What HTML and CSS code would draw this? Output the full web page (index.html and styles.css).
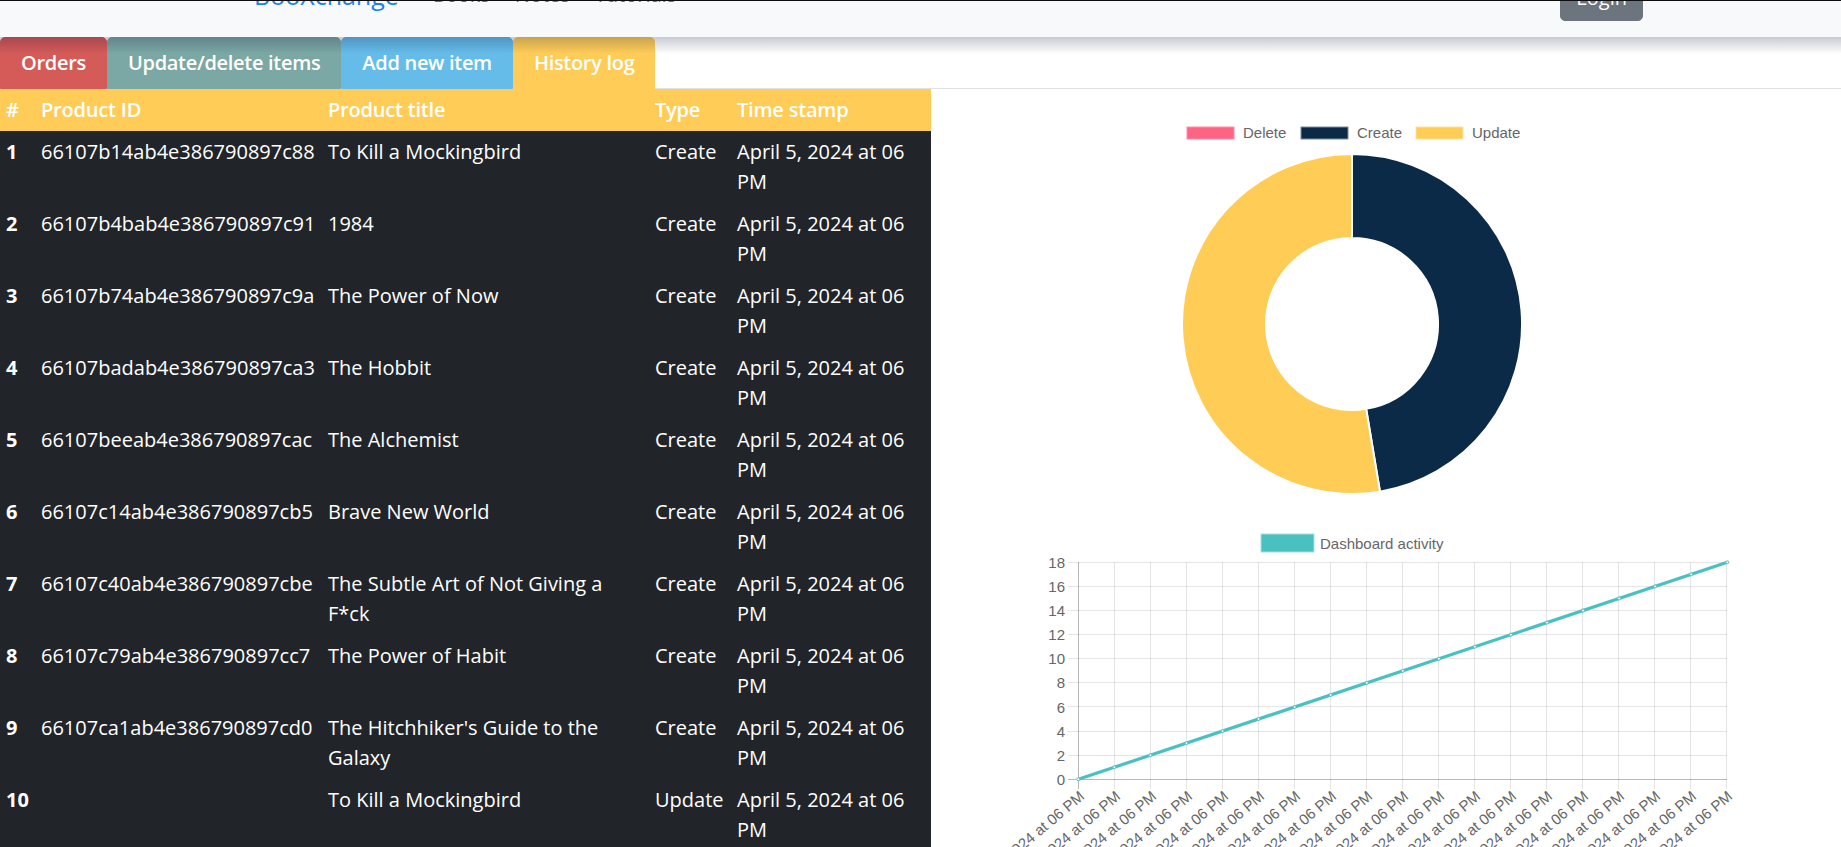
FILE: index.html
```html
<!DOCTYPE html>
<html lang="en">
<head>
<meta charset="utf-8">
<title>BooXchange - History log</title>
<link rel="stylesheet" href="styles.css">
</head>
<body>
<nav class="navbar">
  <div class="nav-inner">
    <a class="brand" href="#">BooXchange</a>
    <ul class="nav-links">
      <li><a href="#">Books</a></li>
      <li><a href="#">Notes</a></li>
      <li><a href="#">Tutorials</a></li>
    </ul>
    <button class="login">Login</button>
  </div>
</nav>

<ul class="tabs">
  <li class="tab tab-orders">Orders</li>
  <li class="tab tab-update">Update/delete items</li>
  <li class="tab tab-add">Add new item</li>
  <li class="tab tab-history">History log</li>
</ul>

<main class="content">
  <table class="log">
    <colgroup>
      <col class="c-num"><col class="c-id"><col class="c-title"><col class="c-type"><col class="c-time">
    </colgroup>
    <thead>
      <tr><th>#</th><th>Product ID</th><th>Product title</th><th>Type</th><th>Time stamp</th></tr>
    </thead>
    <tbody>
      <tr><th>1</th><td>66107b14ab4e386790897c88</td><td>To Kill a Mockingbird</td><td class="type">Create</td><td>April 5, 2024 at 06 PM</td></tr>
      <tr><th>2</th><td>66107b4bab4e386790897c91</td><td>1984</td><td class="type">Create</td><td>April 5, 2024 at 06 PM</td></tr>
      <tr><th>3</th><td>66107b74ab4e386790897c9a</td><td>The Power of Now</td><td class="type">Create</td><td>April 5, 2024 at 06 PM</td></tr>
      <tr><th>4</th><td>66107badab4e386790897ca3</td><td>The Hobbit</td><td class="type">Create</td><td>April 5, 2024 at 06 PM</td></tr>
      <tr><th>5</th><td>66107beeab4e386790897cac</td><td>The Alchemist</td><td class="type">Create</td><td>April 5, 2024 at 06 PM</td></tr>
      <tr><th>6</th><td>66107c14ab4e386790897cb5</td><td>Brave New World</td><td class="type">Create</td><td>April 5, 2024 at 06 PM</td></tr>
      <tr><th>7</th><td>66107c40ab4e386790897cbe</td><td>The Subtle Art of Not Giving a F*ck</td><td class="type">Create</td><td>April 5, 2024 at 06 PM</td></tr>
      <tr><th>8</th><td>66107c79ab4e386790897cc7</td><td>The Power of Habit</td><td class="type">Create</td><td>April 5, 2024 at 06 PM</td></tr>
      <tr><th>9</th><td>66107ca1ab4e386790897cd0</td><td>The Hitchhiker's Guide to the Galaxy</td><td class="type">Create</td><td>April 5, 2024 at 06 PM</td></tr>
      <tr><th>10</th><td></td><td>To Kill a Mockingbird</td><td class="type">Update</td><td>April 5, 2024 at 06 PM</td></tr>
    </tbody>
  </table>

  <section class="charts">
    <svg class="chart chart-doughnut" width="910" height="420" viewBox="0 0 910 420">
      <g class="legend">
        <rect x="256" y="38" width="47" height="12" fill="#ff6384" stroke="#ff8fa6" stroke-width="1"/>
        <text x="312" y="48.6">Delete</text>
        <rect x="370" y="38" width="47" height="12" fill="#0b2a48" stroke="#7d8b9b" stroke-width="1"/>
        <text x="426" y="48.6">Create</text>
        <rect x="485" y="38" width="47" height="12" fill="#ffcd56" stroke="#ffe1a0" stroke-width="1"/>
        <text x="541" y="48.6">Update</text>
      </g>
      <path d="M421,65 A170,170 0 0 1 448.97,402.69 L435.15,319.83 A86,86 0 0 0 421,149 Z" fill="#0b2a48" stroke="#fff" stroke-width="2"/>
      <path d="M448.97,402.69 A170,170 0 1 1 421,65 L421,149 A86,86 0 1 0 435.15,319.83 Z" fill="#ffcd56" stroke="#fff" stroke-width="2"/>
    </svg>

    <svg class="chart chart-line" width="910" height="400" viewBox="0 0 910 400">
      <g class="legend">
        <rect x="330" y="25" width="53" height="18" fill="#4bc0c0" stroke="#a5e0e0" stroke-width="1"/>
        <text x="389" y="39.5">Dashboard activity</text>
      </g>
      <path class="grid" d="M137,246.5H796M137,222.5H796M137,197.5H796M137,173.5H796M137,149.5H796M137,125.5H796M137,101.5H796M137,77.5H796M137,53.5H796
        M183.5,53V280M219.5,53V280M255.5,53V280M291.5,53V280M327.5,53V280M363.5,53V280M399.5,53V280M435.5,53V280M471.5,53V280M507.5,53V280M543.5,53V280M579.5,53V280M615.5,53V280M651.5,53V280M687.5,53V280M723.5,53V280M759.5,53V280M795.5,53V280"/>
      <path class="axis" d="M137,270.5H796M147.5,53V280"/>
      <g class="ylabels">
        <text x="134" y="275.8">0</text>
        <text x="134" y="251.7">2</text>
        <text x="134" y="227.6">4</text>
        <text x="134" y="203.5">6</text>
        <text x="134" y="179.4">8</text>
        <text x="134" y="155.3">10</text>
        <text x="134" y="131.2">12</text>
        <text x="134" y="107.1">14</text>
        <text x="134" y="82.9">16</text>
        <text x="134" y="58.8">18</text>
      </g>
      <g class="xlabels">
        <text transform="translate(151,285) rotate(-40)" dy="0.35em">April 5, 2024 at 06 PM</text>
        <text transform="translate(187,285) rotate(-40)" dy="0.35em">April 5, 2024 at 06 PM</text>
        <text transform="translate(223,285) rotate(-40)" dy="0.35em">April 5, 2024 at 06 PM</text>
        <text transform="translate(259,285) rotate(-40)" dy="0.35em">April 5, 2024 at 06 PM</text>
        <text transform="translate(295,285) rotate(-40)" dy="0.35em">April 5, 2024 at 06 PM</text>
        <text transform="translate(331,285) rotate(-40)" dy="0.35em">April 5, 2024 at 06 PM</text>
        <text transform="translate(367,285) rotate(-40)" dy="0.35em">April 5, 2024 at 06 PM</text>
        <text transform="translate(403,285) rotate(-40)" dy="0.35em">April 5, 2024 at 06 PM</text>
        <text transform="translate(439,285) rotate(-40)" dy="0.35em">April 5, 2024 at 06 PM</text>
        <text transform="translate(475,285) rotate(-40)" dy="0.35em">April 5, 2024 at 06 PM</text>
        <text transform="translate(511,285) rotate(-40)" dy="0.35em">April 5, 2024 at 06 PM</text>
        <text transform="translate(547,285) rotate(-40)" dy="0.35em">April 5, 2024 at 06 PM</text>
        <text transform="translate(583,285) rotate(-40)" dy="0.35em">April 5, 2024 at 06 PM</text>
        <text transform="translate(619,285) rotate(-40)" dy="0.35em">April 5, 2024 at 06 PM</text>
        <text transform="translate(655,285) rotate(-40)" dy="0.35em">April 5, 2024 at 06 PM</text>
        <text transform="translate(691,285) rotate(-40)" dy="0.35em">April 5, 2024 at 06 PM</text>
        <text transform="translate(727,285) rotate(-40)" dy="0.35em">April 5, 2024 at 06 PM</text>
        <text transform="translate(763,285) rotate(-40)" dy="0.35em">April 5, 2024 at 06 PM</text>
        <text transform="translate(799,285) rotate(-40)" dy="0.35em">April 5, 2024 at 06 PM</text>
      </g>
      <polyline class="line" points="147.3,270.3 796.3,53.3"/>
      <g class="points">
        <circle cx="147.3" cy="270.3" r="1.5"/>
        <circle cx="183.36" cy="258.24" r="1.5"/>
        <circle cx="219.41" cy="246.19" r="1.5"/>
        <circle cx="255.47" cy="234.13" r="1.5"/>
        <circle cx="291.52" cy="222.08" r="1.5"/>
        <circle cx="327.58" cy="210.02" r="1.5"/>
        <circle cx="363.64" cy="197.96" r="1.5"/>
        <circle cx="399.69" cy="185.91" r="1.5"/>
        <circle cx="435.75" cy="173.85" r="1.5"/>
        <circle cx="471.8" cy="161.8" r="1.5"/>
        <circle cx="507.86" cy="149.74" r="1.5"/>
        <circle cx="543.92" cy="137.68" r="1.5"/>
        <circle cx="579.97" cy="125.63" r="1.5"/>
        <circle cx="616.03" cy="113.57" r="1.5"/>
        <circle cx="652.08" cy="101.52" r="1.5"/>
        <circle cx="688.14" cy="89.46" r="1.5"/>
        <circle cx="724.2" cy="77.4" r="1.5"/>
        <circle cx="760.25" cy="65.35" r="1.5"/>
        <circle cx="796.3" cy="53.3" r="1.5"/>
      </g>
    </svg>
  </section>
</main>
</body>
</html>
```

FILE: styles.css
```css
* { box-sizing: border-box; }

body {
  margin: 0;
  font-family: "Open Sans", "Liberation Sans", sans-serif;
  font-size: 20px;
  line-height: 1.5;
  color: #212529;
  background: #fff;
}

.navbar {
  position: relative;
  z-index: 2;
  background: #f8f9fa;
}
.navbar::before {
  content: "";
  position: absolute;
  left: 0; right: 0; top: 0;
  height: 1px;
  background: #0e0e0e;
  z-index: 3;
}
.navbar::after {
  content: "";
  position: absolute;
  left: 0; right: 0; top: 100%;
  height: 17px;
  background: linear-gradient(rgba(0, 0, 52, 0.21), rgba(0, 0, 52, 0));
  pointer-events: none;
}
.nav-inner {
  height: 37px;
  overflow: hidden;
  display: flex;
  align-items: flex-start;
  padding: 0 198px 0 254px;
}
.brand {
  margin-top: -23px;
  font-size: 25px;
  line-height: 37.5px;
  color: #1a7ff2;
  text-decoration: none;
  margin-right: 34px;
}
.nav-links {
  list-style: none;
  margin: -20px 0 0 0;
  padding: 0;
  display: flex;
  gap: 25px;
}
.nav-links a {
  color: #1a7ff2;
  text-decoration: none;
  line-height: 30px;
}
.login {
  margin-left: auto;
  margin-top: -25px;
  font: inherit;
  line-height: 30px;
  padding: 7px 15px;
  border: 1px solid #6c757d;
  border-radius: 5px;
  background: #6c757d;
  color: #fff;
}

/* ---------- tabs ---------- */
.tabs {
  list-style: none;
  margin: 0;
  padding: 0;
  display: flex;
  border-bottom: 1px solid #dee2e6;
}
.tab {
  margin-bottom: -1px;
  padding: 10px 20px;
  line-height: 30px;
  font-weight: 600;
  letter-spacing: -0.3px;
  color: #fff;
  border: 1px solid transparent;
  border-radius: 5px 5px 0 0;
}
.tab-orders { background: #d55b58; border-color: #d55b58; }
.tab-update { background: #7ba8a4; border-color: #7ba8a4; }
.tab-add { background: #66bce9; border-color: #66bce9; }
.tab-history { background: #ffcd57; border-color: #ffcd57; }

/* ---------- content ---------- */
.content {
  display: grid;
  grid-template-columns: 931px 1fr;
  align-items: start;
}

.log {
  width: 931px;
  table-layout: fixed;
  border-collapse: collapse;
  background: #212529;
  color: #fff;
}
.c-num { width: 35px; }
.c-id { width: 287px; }
.c-title { width: 327px; }
.c-type { width: 82px; }
.c-time { width: 200px; }

.log th,
.log td {
  padding: 6px;
  line-height: 30px;
  text-align: left;
  vertical-align: top;
}
.log thead th {
  background: #ffcd57;
  font-weight: 600;
  letter-spacing: -0.2px;
}
.log tbody th { font-weight: 700; }
.log .type { white-space: nowrap; }

/* ---------- charts ---------- */
.charts {
  display: flex;
  flex-direction: column;
}
.chart {
  display: block;
  font-family: "Liberation Sans", Arial, sans-serif;
  font-size: 15px;
}
.chart text { fill: #666; }
.grid {
  fill: none;
  stroke: rgba(0, 0, 0, 0.1);
  stroke-width: 1;
}
.axis {
  fill: none;
  stroke: rgba(0, 0, 0, 0.28);
  stroke-width: 1;
}
.ylabels text { text-anchor: end; }
.xlabels text { text-anchor: end; }
.line {
  fill: none;
  stroke: #4bc0c0;
  stroke-width: 3.2;
}
.points circle {
  fill: #fff;
  stroke: #4bc0c0;
  stroke-width: 1;
}
```
